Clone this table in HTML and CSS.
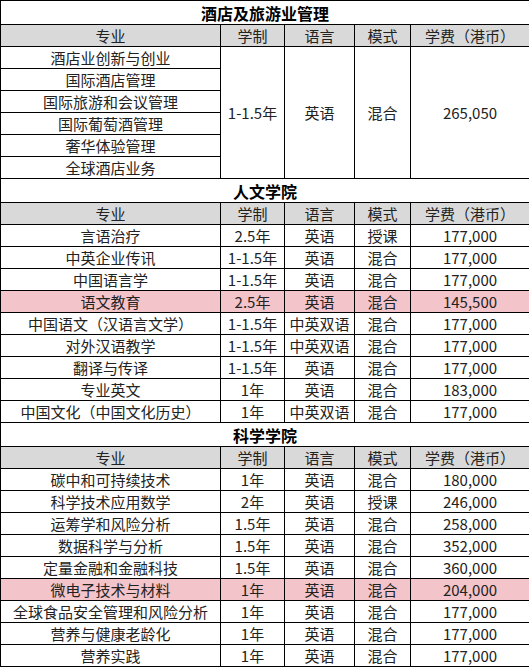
FILE: index.html
```html
<!DOCTYPE html>
<html lang="zh-CN">
<head>
<meta charset="utf-8">
<title>课程学费</title>
<link rel="stylesheet" href="styles.css">
</head>
<body>
<table class="fees">
  <colgroup>
    <col class="c-major"><col class="c-len"><col class="c-lang"><col class="c-mode"><col class="c-fee">
  </colgroup>
  <tbody>
    <tr class="title"><td colspan="5">酒店及旅游业管理</td></tr>
    <tr class="head"><td>专业</td><td>学制</td><td>语言</td><td>模式</td><td>学费<span class="pn">（</span>港币<span class="pn">）</span></td></tr>
    <tr><td>酒店业创新与创业</td><td rowspan="6">1-1.5年</td><td rowspan="6">英语</td><td rowspan="6">混合</td><td rowspan="6">265,050</td></tr>
    <tr><td>国际酒店管理</td></tr>
    <tr><td>国际旅游和会议管理</td></tr>
    <tr><td>国际葡萄酒管理</td></tr>
    <tr><td>奢华体验管理</td></tr>
    <tr><td>全球酒店业务</td></tr>

    <tr class="title"><td colspan="5">人文学院</td></tr>
    <tr class="head"><td>专业</td><td>学制</td><td>语言</td><td>模式</td><td>学费<span class="pn">（</span>港币<span class="pn">）</span></td></tr>
    <tr><td>言语治疗</td><td>2.5年</td><td>英语</td><td>授课</td><td>177,000</td></tr>
    <tr><td>中英企业传讯</td><td>1-1.5年</td><td>英语</td><td>混合</td><td>177,000</td></tr>
    <tr><td>中国语言学</td><td>1-1.5年</td><td>英语</td><td>混合</td><td>177,000</td></tr>
    <tr class="hl"><td>语文教育</td><td>2.5年</td><td>英语</td><td>混合</td><td>145,500</td></tr>
    <tr><td>中国语文<span class="pn">（</span>汉语言文学<span class="pn">）</span></td><td>1-1.5年</td><td>中英双语</td><td>混合</td><td>177,000</td></tr>
    <tr><td>对外汉语教学</td><td>1-1.5年</td><td>中英双语</td><td>混合</td><td>177,000</td></tr>
    <tr><td>翻译与传译</td><td>1-1.5年</td><td>英语</td><td>混合</td><td>177,000</td></tr>
    <tr><td>专业英文</td><td>1年</td><td>英语</td><td>混合</td><td>183,000</td></tr>
    <tr><td>中国文化<span class="pn">（</span>中国文化历史<span class="pn">）</span></td><td>1年</td><td>中英双语</td><td>混合</td><td>177,000</td></tr>

    <tr class="title"><td colspan="5">科学学院</td></tr>
    <tr class="head"><td>专业</td><td>学制</td><td>语言</td><td>模式</td><td>学费<span class="pn">（</span>港币<span class="pn">）</span></td></tr>
    <tr><td>碳中和可持续技术</td><td>1年</td><td>英语</td><td>混合</td><td>180,000</td></tr>
    <tr><td>科学技术应用数学</td><td>2年</td><td>英语</td><td>授课</td><td>246,000</td></tr>
    <tr><td>运筹学和风险分析</td><td>1.5年</td><td>英语</td><td>混合</td><td>258,000</td></tr>
    <tr><td>数据科学与分析</td><td>1.5年</td><td>英语</td><td>混合</td><td>352,000</td></tr>
    <tr><td>定量金融和金融科技</td><td>1.5年</td><td>英语</td><td>混合</td><td>360,000</td></tr>
    <tr class="hl"><td>微电子技术与材料</td><td>1年</td><td>英语</td><td>混合</td><td>204,000</td></tr>
    <tr><td>全球食品安全管理和风险分析</td><td>1年</td><td>英语</td><td>混合</td><td>177,000</td></tr>
    <tr><td>营养与健康老龄化</td><td>1年</td><td>英语</td><td>混合</td><td>177,000</td></tr>
    <tr><td>营养实践</td><td>1年</td><td>英语</td><td>混合</td><td>177,000</td></tr>
  </tbody>
</table>
</body>
</html>
```

FILE: styles.css
```css
html, body {
  margin: 0;
  padding: 0;
  background: #ffffff;
}

.fees {
  border-collapse: collapse;
  table-layout: fixed;
  width: 529px;
  font-family: "Noto Sans CJK SC", "Noto Sans", sans-serif;
  font-size: 15px;
  color: #222222;
}

.c-major { width: 220px; }
.c-len { width: 64px; }
.c-lang { width: 70px; }
.c-mode { width: 56px; }
.c-fee { width: 119px; }

.fees td {
  border: 1px solid #000000;
  padding: 0;
  height: 21px;
  line-height: 20px;
  text-align: center;
  vertical-align: middle;
  white-space: nowrap;
  overflow: hidden;
}

.fees .title td {
  height: 23px;
  font-size: 16px;
  font-weight: bold;
  color: #000000;
  background: #ffffff;
}

.fees .head td {
  background: #d9d9d9;
}

.fees .hl td {
  background: #f3c4c9;
}

.pn {
  font-family: "Noto Sans CJK TC", "Noto Sans CJK SC", sans-serif;
}
```
